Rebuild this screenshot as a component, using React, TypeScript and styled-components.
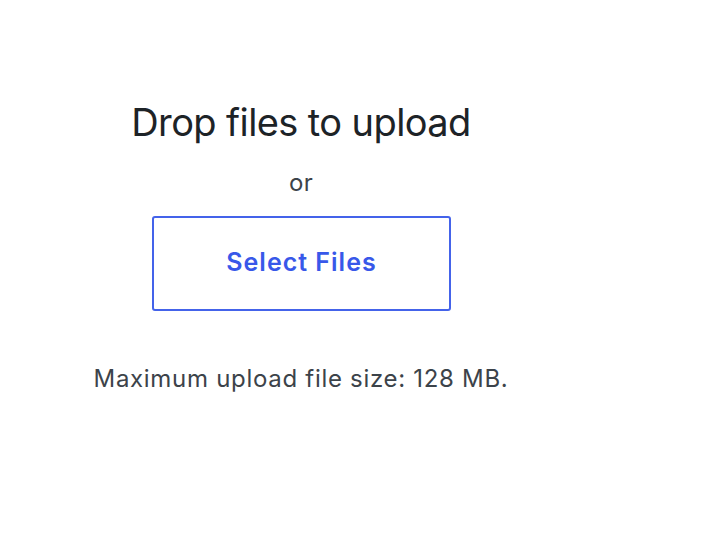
import React from "react";
import styled, { createGlobalStyle } from "styled-components";

const GlobalStyle = createGlobalStyle`
  html, body {
    margin: 0;
    padding: 0;
    background: #ffffff;
  }
  body {
    font-family: Inter, "Noto Sans", "Liberation Sans", sans-serif;
  }
`;

const Page = styled.div`
  width: 602px;
  padding-top: 99px;
  display: flex;
  flex-direction: column;
  align-items: center;
  text-align: center;
`;

const Heading = styled.h2`
  margin: 0;
  font-size: 38px;
  line-height: 46px;
  font-weight: 400;
  color: #1d2327;
  letter-spacing: -0.6px;
`;

const Or = styled.p`
  margin: 23px 0 0;
  font-size: 24px;
  line-height: 29px;
  color: #3c434a;
  letter-spacing: 0.3px;
`;

const SelectButton = styled.button`
  margin-top: 19px;
  width: 299px;
  height: 95px;
  box-sizing: border-box;
  display: flex;
  align-items: center;
  justify-content: center;
  padding: 0 0 4px 1px;
  background: #ffffff;
  border: 2px solid #4463ea;
  border-radius: 3px;
  font-family: inherit;
  font-size: 25px;
  font-weight: 600;
  letter-spacing: 1px;
  color: #3858e9;
  cursor: pointer;
`;

const MaxSize = styled.p`
  margin: 53px 0 0;
  font-size: 24px;
  line-height: 29px;
  color: #3c434a;
  letter-spacing: 0.7px;
`;

export default function App() {
  return (
    <>
      <GlobalStyle />
      <Page>
        <Heading>Drop files to upload</Heading>
        <Or>or</Or>
        <SelectButton type="button">Select Files</SelectButton>
        <MaxSize>Maximum upload file size: 128 MB.</MaxSize>
      </Page>
    </>
  );
}
